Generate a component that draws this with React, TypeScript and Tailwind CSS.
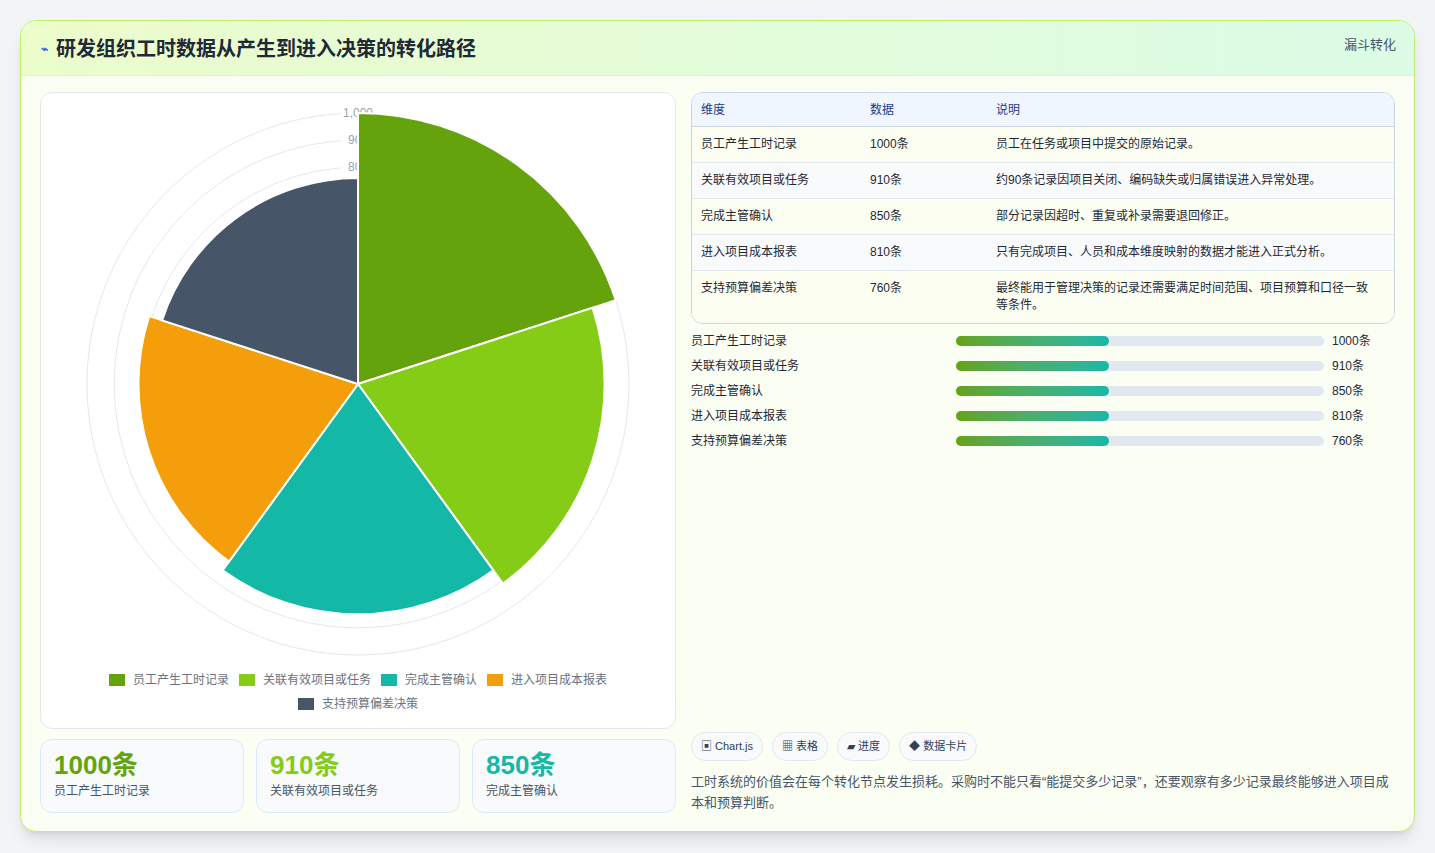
import React from "react";

const rows = [
  { name: "员工产生工时记录", value: 1000, note: "员工在任务或项目中提交的原始记录。", color: "#65a30d" },
  { name: "关联有效项目或任务", value: 910, note: "约90条记录因项目关闭、编码缺失或归属错误进入异常处理。", color: "#84cc16" },
  { name: "完成主管确认", value: 850, note: "部分记录因超时、重复或补录需要退回修正。", color: "#14b8a6" },
  { name: "进入项目成本报表", value: 810, note: "只有完成项目、人员和成本维度映射的数据才能进入正式分析。", color: "#f59e0b" },
  { name: "支持预算偏差决策", value: 760, note: "最终能用于管理决策的记录还需要满足时间范围、项目预算和口径一致等条件。", color: "#475569" },
];

const font = { fontFamily: '"Liberation Sans", "Noto Sans CJK SC", sans-serif' };

function PolarChart() {
  const cx = 318;
  const cy = 291;
  const k = 0.271;
  const pt = (r: number, deg: number) => {
    const a = (deg * Math.PI) / 180;
    return [cx + r * Math.cos(a), cy + r * Math.sin(a)];
  };
  return (
    <svg width="636" height="570" viewBox="0 0 636 570">
      {[1, 2, 3, 4, 5, 6, 7, 8, 9, 10].map((i) => (
        <circle key={i} cx={cx} cy={cy} r={i * 100 * k} fill="none" stroke="#e5e7eb" strokeWidth="1" />
      ))}
      {[800, 900, 1000].map((v) => (
        <g key={v}>
          <rect x={cx - 17} y={cy - v * k - 7} width="34" height="13" fill="white" />
          <text x={cx} y={cy - v * k + 4} textAnchor="middle" fontSize="12" fill="#9ca3af" style={font}>
            {v === 1000 ? "1,000" : v}
          </text>
        </g>
      ))}
      {rows.map((r, i) => {
        const rad = r.value * k;
        const s = -90 + i * 72;
        const [x1, y1] = pt(rad, s);
        const [x2, y2] = pt(rad, s + 72);
        return (
          <path
            key={r.name}
            d={`M${cx} ${cy} L${x1} ${y1} A${rad} ${rad} 0 0 1 ${x2} ${y2} Z`}
            fill={r.color}
            stroke="white"
            strokeWidth="2"
          />
        );
      })}
    </svg>
  );
}

export default function App() {
  return (
    <div className="min-h-screen bg-[#f3f4f6] p-5" style={font}>
      <div className="h-[812px] rounded-2xl border border-[#bef264] bg-[#fbfef2] overflow-hidden shadow-lg flex flex-col">
        <header className="h-[55px] flex items-start justify-between pl-5 pr-[18px] pt-[13px] border-b border-[#e2f0d9] bg-gradient-to-r from-[#ecfccb] to-[#dcfce7]">
          <h1 className="flex items-center gap-2 text-[20px] font-bold text-[#1f2937]">
            <span className="text-[12px] text-[#2563eb]">⌁</span>研发组织工时数据从产生到进入决策的转化路径
          </h1>
          <span className="text-[13px] text-[#475569] mt-[1px]">漏斗转化</span>
        </header>
        <div className="flex-1 grid grid-cols-[636px_704px] gap-[15px] pl-[19px] pt-4 pb-[18px]">
          <div className="flex flex-col gap-[10px]">
            <div className="flex-1 rounded-xl border border-[#e5e7eb] bg-white flex flex-col items-center overflow-hidden">
              <PolarChart />
              <div className="flex flex-wrap justify-center gap-x-[10px] gap-y-[6px] text-[12px] text-[#6b7280] w-[540px] mt-[8px]">
                {rows.map((r) => (
                  <span key={r.name} className="flex items-center gap-[8px]">
                    <span className="w-[16px] h-[12px]" style={{ background: r.color }} />
                    {r.name}
                  </span>
                ))}
              </div>
            </div>
            <div className="grid grid-cols-3 gap-3">
              {rows.slice(0, 3).map((r) => (
                <div key={r.name} className="h-[74px] rounded-xl border border-[#dbeafe] bg-[#f8fafc] px-[13px] pt-[9px]">
                  <div className="text-[26px] font-bold leading-[32px]" style={{ color: r.color }}>{r.value}条</div>
                  <div className="text-[12px] text-[#475569] mt-[1px]">{r.name}</div>
                </div>
              ))}
            </div>
          </div>
          <div className="flex flex-col">
            <div className="rounded-xl border border-[#cbd5e1] overflow-hidden text-[12px] text-[#1f2937]">
              <div className="grid grid-cols-[169px_126px_1fr] h-[34px] items-center bg-[#eff6ff] text-[#1e3a8a] px-[9px] border-b border-[#cbd5e1]">
                <span>维度</span><span>数据</span><span>说明</span>
              </div>
              {rows.map((r, i) => (
                <div
                  key={r.name}
                  className={`grid grid-cols-[169px_126px_1fr] px-[9px] py-[9px] leading-[17px] ${i < 4 ? "border-b border-[#e2e8f0]" : ""} ${i % 2 ? "bg-[#f8fafc]" : "bg-[#fbfef0]"}`}
                >
                  <span>{r.name}</span><span>{r.value}条</span><span className="pr-2">{r.note}</span>
                </div>
              ))}
            </div>
            <div className="flex flex-col gap-[7px] mt-[8px] text-[12px] text-[#1f2937]">
              {rows.map((r) => (
                <div key={r.name} className="grid grid-cols-[265px_376px_1fr] items-center h-[18px]">
                  <span>{r.name}</span>
                  <div className="h-[10px] rounded-full bg-[#e2e8f0] w-[368px]">
                    <div className="h-full w-[153px] rounded-full bg-gradient-to-r from-[#65a30d] to-[#14b8a6]" />
                  </div>
                  <span>{r.value}条</span>
                </div>
              ))}
            </div>
            <div className="flex-1" />
            <div className="flex gap-[9px] text-[11px] text-[#334155]">
              {["▣ Chart.js", "▦ 表格", "▰ 进度", "◆ 数据卡片"].map((c) => (
                <span key={c} className="h-[29px] px-[9px] flex items-center rounded-full border border-[#e2e8f0] bg-[#f8fafc]">{c}</span>
              ))}
            </div>
            <p className="mt-[10px] text-[13px] leading-[21px] text-[#475569]">
              工时系统的价值会在每个转化节点发生损耗。采购时不能只看“能提交多少记录”，还要观察有多少记录最终能够进入项目成本和预算判断。
            </p>
          </div>
        </div>
      </div>
    </div>
  );
}
